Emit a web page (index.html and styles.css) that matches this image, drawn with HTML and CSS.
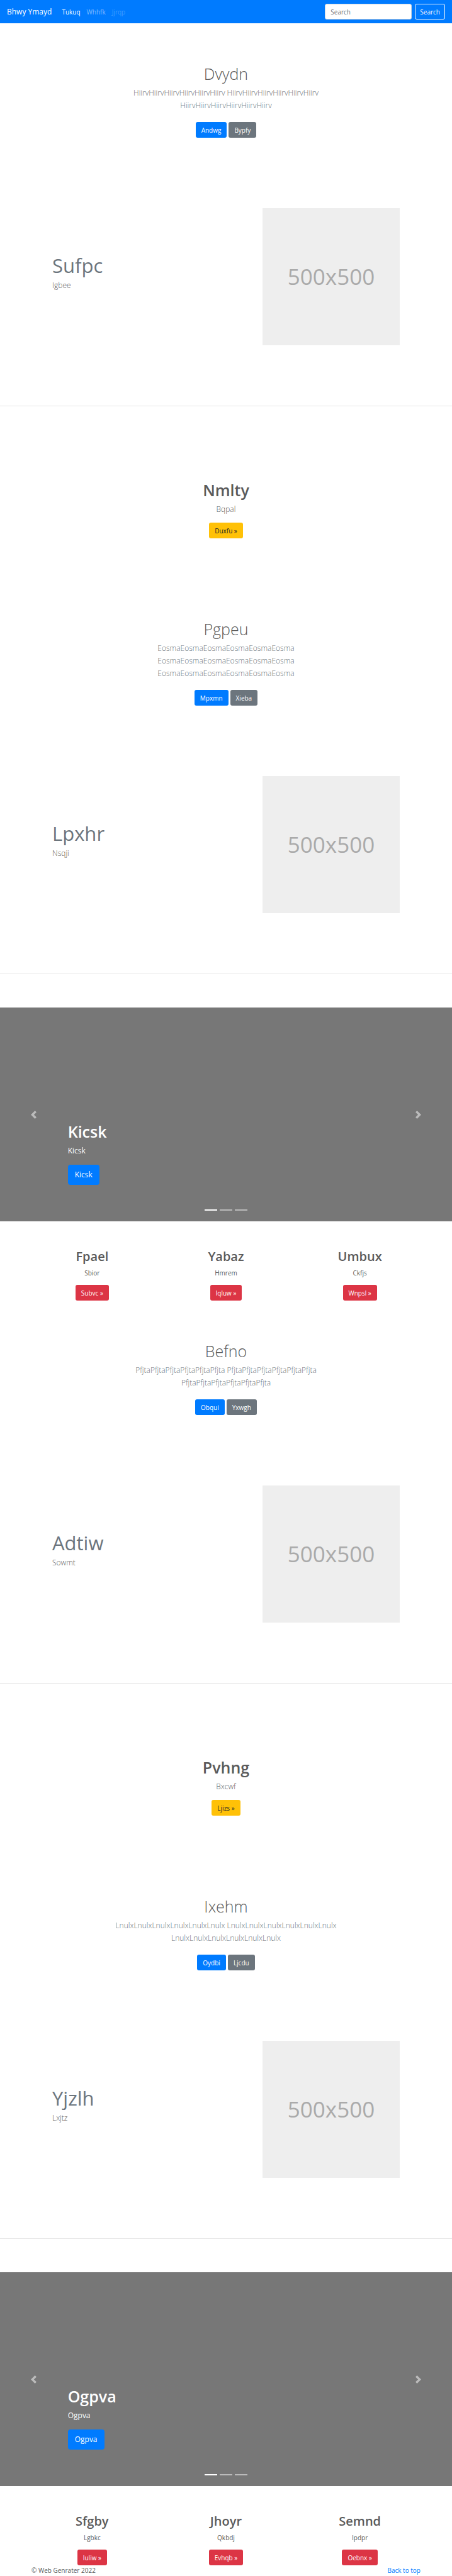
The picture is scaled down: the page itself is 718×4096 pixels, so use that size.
FILE: index.html
```html
<!DOCTYPE html>
<html lang="en">
<head>
<meta charset="utf-8">
<meta name="viewport" content="width=device-width, initial-scale=1">
<title>Bhwy Ymayd</title>
<link rel="stylesheet" href="styles.css">
</head>
<body>
<header class="navbar" id="top">
  <a class="brand" href="#">Bhwy Ymayd</a>
  <nav class="nav-links">
    <a class="nav-link active" href="#">Tukuq</a>
    <a class="nav-link" href="#">Whhfk</a>
    <a class="nav-link disabled" href="#" aria-disabled="true">Jjrqp</a>
  </nav>
  <form class="search">
    <input class="search-input" type="search" placeholder="Search" aria-label="Search">
    <button class="btn btn-outline" type="submit">Search</button>
  </form>
</header>
<main>
  <section class="hero">
    <h1 class="title light">Dvydn</h1>
    <p class="lead muted">HiirvHiirvHiirvHiirvHiirvHiirv HiirvHiirvHiirvHiirvHiirvHiirv HiirvHiirvHiirvHiirvHiirvHiirv</p>
    <div class="actions"><a class="btn btn-primary" href="#">Andwg</a><a class="btn btn-secondary" href="#">Bypfy</a></div>
  </section>
  <section class="feature">
    <div class="feature-text"><h2 class="feature-title">Sufpc</h2><p class="lead">Igbee</p></div>
    <div class="placeholder">500x500</div>
  </section>
  <hr class="divider">
  <section class="callout">
    <h2 class="title">Nmlty</h2>
    <p class="lead">Bqpal</p>
    <a class="btn btn-warning" href="#">Duxfu »</a>
  </section>
  <section class="hero">
    <h2 class="title light">Pgpeu</h2>
    <p class="lead muted">EosmaEosmaEosmaEosmaEosmaEosma EosmaEosmaEosmaEosmaEosmaEosma EosmaEosmaEosmaEosmaEosmaEosma</p>
    <div class="actions"><a class="btn btn-primary" href="#">Mpxmn</a><a class="btn btn-secondary" href="#">Xieba</a></div>
  </section>
  <section class="feature">
    <div class="feature-text"><h2 class="feature-title">Lpxhr</h2><p class="lead">Nsqji</p></div>
    <div class="placeholder">500x500</div>
  </section>
  <hr class="divider">
  <section class="carousel">
    <button class="control" type="button" aria-label="Previous"><svg class="chevron" viewBox="0 0 8 8"><path d="M5.25 0l-4 4 4 4 1.5-1.5L4.25 4l2.5-2.5L5.25 0z"/></svg></button>
    <div class="caption">
      <h2 class="title">Kicsk</h2>
      <p class="caption-text">Kicsk</p>
      <a class="btn btn-primary btn-large" href="#">Kicsk</a>
    </div>
    <button class="control" type="button" aria-label="Next"><svg class="chevron" viewBox="0 0 8 8"><path d="M2.75 0l-1.5 1.5L3.75 4l-2.5 2.5L2.75 8l4-4-4-4z"/></svg></button>
    <div class="indicators"><span class="indicator current"></span><span class="indicator"></span><span class="indicator"></span></div>
  </section>
  <section class="columns">
    <div class="column"><h2 class="column-title">Fpael</h2><p class="column-text">Sbior</p><a class="btn btn-danger" href="#">Subvc »</a></div>
    <div class="column"><h2 class="column-title">Yabaz</h2><p class="column-text">Hmrem</p><a class="btn btn-danger" href="#">Iqluw »</a></div>
    <div class="column"><h2 class="column-title">Umbux</h2><p class="column-text">Ckfjs</p><a class="btn btn-danger" href="#">Wnpsl »</a></div>
  </section>
  <section class="hero">
    <h2 class="title light">Befno</h2>
    <p class="lead muted">PfjtaPfjtaPfjtaPfjtaPfjtaPfjta PfjtaPfjtaPfjtaPfjtaPfjtaPfjta PfjtaPfjtaPfjtaPfjtaPfjtaPfjta</p>
    <div class="actions"><a class="btn btn-primary" href="#">Obqui</a><a class="btn btn-secondary" href="#">Yxwgh</a></div>
  </section>
  <section class="feature">
    <div class="feature-text"><h2 class="feature-title">Adtiw</h2><p class="lead">Sowmt</p></div>
    <div class="placeholder">500x500</div>
  </section>
  <hr class="divider">
  <section class="callout">
    <h2 class="title">Pvhng</h2>
    <p class="lead">Bxcwf</p>
    <a class="btn btn-warning" href="#">Ljizs »</a>
  </section>
  <section class="hero">
    <h2 class="title light">Ixehm</h2>
    <p class="lead muted">LnulxLnulxLnulxLnulxLnulxLnulx LnulxLnulxLnulxLnulxLnulxLnulx LnulxLnulxLnulxLnulxLnulxLnulx</p>
    <div class="actions"><a class="btn btn-primary" href="#">Oydbi</a><a class="btn btn-secondary" href="#">Ljcdu</a></div>
  </section>
  <section class="feature">
    <div class="feature-text"><h2 class="feature-title">Yjzlh</h2><p class="lead">Lxjtz</p></div>
    <div class="placeholder">500x500</div>
  </section>
  <hr class="divider">
  <section class="carousel">
    <button class="control" type="button" aria-label="Previous"><svg class="chevron" viewBox="0 0 8 8"><path d="M5.25 0l-4 4 4 4 1.5-1.5L4.25 4l2.5-2.5L5.25 0z"/></svg></button>
    <div class="caption">
      <h2 class="title">Ogpva</h2>
      <p class="caption-text">Ogpva</p>
      <a class="btn btn-primary btn-large" href="#">Ogpva</a>
    </div>
    <button class="control" type="button" aria-label="Next"><svg class="chevron" viewBox="0 0 8 8"><path d="M2.75 0l-1.5 1.5L3.75 4l-2.5 2.5L2.75 8l4-4-4-4z"/></svg></button>
    <div class="indicators"><span class="indicator current"></span><span class="indicator"></span><span class="indicator"></span></div>
  </section>
  <section class="columns">
    <div class="column"><h2 class="column-title">Sfgby</h2><p class="column-text">Lgbkc</p><a class="btn btn-danger" href="#">Iuliw »</a></div>
    <div class="column"><h2 class="column-title">Jhoyr</h2><p class="column-text">Qkbdj</p><a class="btn btn-danger" href="#">Evhqb »</a></div>
    <div class="column"><h2 class="column-title">Semnd</h2><p class="column-text">Ipdpr</p><a class="btn btn-danger" href="#">Oebnx »</a></div>
  </section>
</main>
<footer class="footer">
  <span>© Web Genrater 2022</span>
  <a class="footer-link" href="#top">Back to top</a>
</footer>
</body>
</html>
```
FILE: styles.css
```css
* { box-sizing: border-box; }
body {
  margin: 0;
  background: #fff;
  color: #5a5a5a;
  font-family: "Open Sans", "Noto Sans", sans-serif;
  font-size: 10px;
  line-height: 16px;
}
h1, h2, p { margin: 0; }
a { text-decoration: none; }

.navbar {
  display: flex;
  align-items: center;
  padding: 6px 11px;
  background: #007bff;
}
.brand { margin-right: 16px; color: #fff; font-size: 12px; line-height: 20px; }
.nav-links { display: flex; gap: 10px; }
.nav-link { color: rgba(255, 255, 255, .5); }
.nav-link.active { color: #fff; }
.nav-link.disabled { color: rgba(255, 255, 255, .25); }
.search { display: flex; gap: 5px; margin-left: auto; }
.search-input {
  width: 138px;
  height: 25px;
  padding: 0 8px;
  border: 1px solid #ced4da;
  border-radius: 3px;
  background: #fff;
  color: #495057;
  font: inherit;
}
.search-input::placeholder { color: #6c757d; opacity: 1; }

.btn {
  display: inline-block;
  padding: 4px 8px 3px;
  border: 1px solid transparent;
  border-radius: 3px;
  color: #fff;
  font: inherit;
  text-align: center;
}
.btn-outline { padding: 3px 7px; border-color: #f8f9fa; background: transparent; color: #f8f9fa; }
.btn-primary { background: #007bff; }
.btn-secondary { background: #6c757d; }
.btn-warning { background: #ffc107; color: #212529; }
.btn-danger { background: #dc3545; }
.btn-large { padding: 5px 10px; border-radius: 4px; font-size: 12px; line-height: 20px; }

.title { margin-bottom: 5px; font-size: 25px; line-height: 32px; font-weight: 600; }
.title.light { font-weight: 300; }
.lead { font-size: 12px; line-height: 20px; font-weight: 300; }
.muted { color: #6c757d; }

.hero {
  display: flex;
  flex-direction: column;
  align-items: center;
  padding: 64px 16px;
  text-align: center;
}
.hero .lead { max-width: 400px; margin-bottom: 16px; }
.actions { display: flex; gap: 3px; }

.feature {
  display: flex;
  align-items: center;
  justify-content: space-between;
  padding: 48px 83px 96px;
}
.feature-title {
  margin-bottom: 2px;
  color: #6c757d;
  font-size: 31px;
  line-height: 40px;
  font-weight: 400;
}
.feature-text { padding-bottom: 14px; }
.placeholder {
  display: grid;
  place-items: center;
  width: 218px;
  aspect-ratio: 1;
  background: #eee;
  color: #aaa;
  font-size: 35px;
}
.divider { margin: 0; border: 0; border-top: 1px solid #e5e5e5; }

.callout {
  display: flex;
  flex-direction: column;
  align-items: center;
  padding: 117px 16px 64px;
}
.callout .lead { margin-bottom: 11px; }

.carousel {
  position: relative;
  display: grid;
  grid-template-columns: 15% 1fr 15%;
  min-height: 340px;
  margin-top: 53px;
  background: #777;
  color: #fff;
}
.control {
  display: grid;
  place-items: center;
  padding: 0;
  border: 0;
  background: none;
  opacity: .5;
}
.chevron { width: 13px; height: 13px; fill: #fff; }
.caption {
  display: flex;
  flex-direction: column;
  align-items: flex-start;
  justify-content: flex-end;
  padding-bottom: 58px;
}
.caption-text { margin-bottom: 12px; font-size: 12px; line-height: 20px; }
.indicators {
  position: absolute;
  right: 0;
  bottom: 17px;
  left: 0;
  display: flex;
  justify-content: center;
  gap: 4px;
}
.indicator { width: 20px; height: 2px; background: #fff; opacity: .5; }
.indicator.current { opacity: 1; }

.columns {
  display: grid;
  grid-template-columns: repeat(3, 1fr);
  padding: 43px 40px 0;
}
.column { display: flex; flex-direction: column; align-items: center; }
.column-title { margin-bottom: 5px; font-size: 20px; line-height: 26px; font-weight: 600; }
.column-text { margin-bottom: 11px; }

.footer { display: flex; justify-content: space-between; padding: 0 50px; }
.footer-link { color: #007bff; }
```
